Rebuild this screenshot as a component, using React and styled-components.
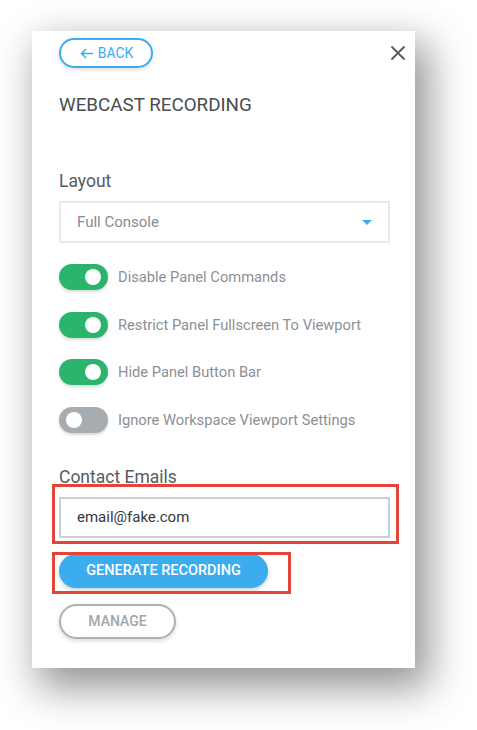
import React, { useState } from 'react';
import styled, { createGlobalStyle } from 'styled-components';

const GlobalStyle = createGlobalStyle`
  body {
    margin: 0;
    background: #fff;
    font-family: Roboto, "Liberation Sans", sans-serif;
  }
`;

const options = [
  { id: 1, label: 'Disable Panel Commands', on: true },
  { id: 2, label: 'Restrict Panel Fullscreen To Viewport', on: true },
  { id: 3, label: 'Hide Panel Button Bar', on: true },
  { id: 4, label: 'Ignore Workspace Viewport Settings', on: false },
];

const App = () => {
  const [toggles, setToggles] = useState(options);
  const [email, setEmail] = useState('email@fake.com');

  const flip = (id) =>
    setToggles(toggles.map((t) => (t.id === id ? { ...t, on: !t.on } : t)));

  return (
    <Page>
      <GlobalStyle />
      <Panel>
        <Header>
          <BackButton>
            <svg width="14" height="11" viewBox="0 0 14 11">
              <path d="M13 5.5 H1.5 M6 1 L1.5 5.5 L6 10" stroke="#3badef" strokeWidth="1.5" fill="none" />
            </svg>
            BACK
          </BackButton>
          <CloseButton aria-label="close">
            <svg width="16" height="16" viewBox="0 0 16 16">
              <path d="M1.5 1.5 L14.5 14.5 M14.5 1.5 L1.5 14.5" stroke="#525a5f" strokeWidth="1.8" fill="none" />
            </svg>
          </CloseButton>
        </Header>
        <Title>WEBCAST RECORDING</Title>

        <Label $top={55}>Layout</Label>
        <Select>
          <span>Full Console</span>
          <Caret />
        </Select>

        <ToggleList>
          {toggles.map((t) => (
            <ToggleRow key={t.id} onClick={() => flip(t.id)}>
              <Switch $on={t.on}>
                <Knob $on={t.on} />
              </Switch>
              <ToggleLabel>{t.label}</ToggleLabel>
            </ToggleRow>
          ))}
        </ToggleList>

        <Label $top={34}>Contact Emails</Label>
        <Highlight $t={13} $l={7} $r={9} $b={6}>
          <Input value={email} onChange={(e) => setEmail(e.target.value)} />
        </Highlight>

        <Highlight $t={2} $l={7} $r={23} $b={6} $inline>
          <PrimaryButton>GENERATE RECORDING</PrimaryButton>
        </Highlight>

        <div>
          <OutlineButton>MANAGE</OutlineButton>
        </div>
      </Panel>
    </Page>
  );
};

export default App;

const Page = styled.div`
  min-height: 730px;
  padding: 31px 0 0 32px;
  box-sizing: border-box;
  overflow: hidden;
`;

const Panel = styled.div`
  box-sizing: border-box;
  width: 383px;
  height: 637px;
  padding: 7px 25px 0 27px;
  background: #fff;
  box-shadow: 10px 16px 38px 4px rgba(0, 0, 0, 0.42);
  display: flex;
  flex-direction: column;
`;

const Header = styled.div`
  display: flex;
  justify-content: space-between;
  align-items: center;
  margin-right: -16px;
`;

const BackButton = styled.button`
  box-sizing: border-box;
  width: 94px;
  height: 30px;
  border: 2px solid #3badef;
  border-radius: 15px;
  background: #fff;
  color: #3badef;
  font-family: Roboto, sans-serif;
  font-size: 14px;
  padding: 0 0 0 1px;
  display: flex;
  align-items: center;
  justify-content: center;
  gap: 4px;
  box-shadow: 0 2px 4px rgba(0, 0, 0, 0.12);
`;

const CloseButton = styled.button`
  border: none;
  background: none;
  padding: 0;
  width: 16px;
  height: 16px;
  display: flex;
`;

const Title = styled.div`
  margin-top: 27px;
  font-size: 18.8px;
  line-height: 21px;
  color: #4a4d50;
`;

const Label = styled.div`
  margin-top: ${(p) => p.$top}px;
  font-size: 17.5px;
  line-height: 21px;
  color: #565a5e;
`;

const Select = styled.div`
  box-sizing: border-box;
  margin-top: 9px;
  height: 42px;
  border: 2px solid #e5eaef;
  display: flex;
  align-items: center;
  justify-content: space-between;
  padding: 0 16px 0 16px;
  font-size: 15px;
  color: #878c91;
`;

const Caret = styled.div`
  width: 0;
  height: 0;
  border-left: 5px solid transparent;
  border-right: 5px solid transparent;
  border-top: 5px solid #3badef;
`;

const ToggleList = styled.div`
  margin-top: 21px;
  display: flex;
  flex-direction: column;
  gap: 21.5px;
`;

const ToggleRow = styled.div`
  display: flex;
  align-items: center;
  gap: 10px;
  cursor: pointer;
`;

const Switch = styled.div`
  width: 49px;
  height: 26px;
  border-radius: 13px;
  background: ${(p) => (p.$on ? '#2bb56c' : '#a7acb0')};
  box-shadow: 0 2px 3px rgba(0, 0, 0, 0.15);
  display: flex;
  align-items: center;
  justify-content: ${(p) => (p.$on ? 'flex-end' : 'flex-start')};
  padding: 0 7px;
  box-sizing: border-box;
`;

const Knob = styled.div`
  width: 16px;
  height: 16px;
  border-radius: 50%;
  background: #fff;
`;

const ToggleLabel = styled.span`
  font-size: 14.7px;
  color: #8b9095;
`;

const Highlight = styled.div`
  position: relative;
  margin-top: ${(p) => (p.$inline ? 16 : 9)}px;
  align-self: ${(p) => (p.$inline ? 'flex-start' : 'stretch')};
  display: flex;
  &::after {
    content: '';
    position: absolute;
    top: -${(p) => p.$t}px;
    left: -${(p) => p.$l}px;
    right: -${(p) => p.$r}px;
    bottom: -${(p) => p.$b}px;
    border: 3px solid #e5443b;
    pointer-events: none;
  }
`;

const Input = styled.input`
  box-sizing: border-box;
  width: 100%;
  height: 41px;
  border: 2px solid #c9d1d8;
  outline: none;
  padding: 0 16px;
  font-family: Roboto, sans-serif;
  font-size: 15px;
  color: #35393c;
`;

const PrimaryButton = styled.button`
  box-sizing: border-box;
  width: 209px;
  height: 34px;
  border: none;
  border-radius: 17px;
  background: #3badef;
  color: #fff;
  font-family: Roboto, sans-serif;
  font-weight: 500;
  font-size: 14.5px;
  padding: 0;
  box-shadow: 0 2px 4px rgba(0, 0, 0, 0.2);
`;

const OutlineButton = styled.button`
  box-sizing: border-box;
  margin-top: 16px;
  width: 117px;
  height: 35px;
  border: 2px solid #aeb2b6;
  border-radius: 18px;
  background: #fff;
  color: #a2a6aa;
  font-family: Roboto, sans-serif;
  font-weight: 500;
  font-size: 14px;
  padding: 0;
  box-shadow: 0 2px 4px rgba(0, 0, 0, 0.15);
`;
